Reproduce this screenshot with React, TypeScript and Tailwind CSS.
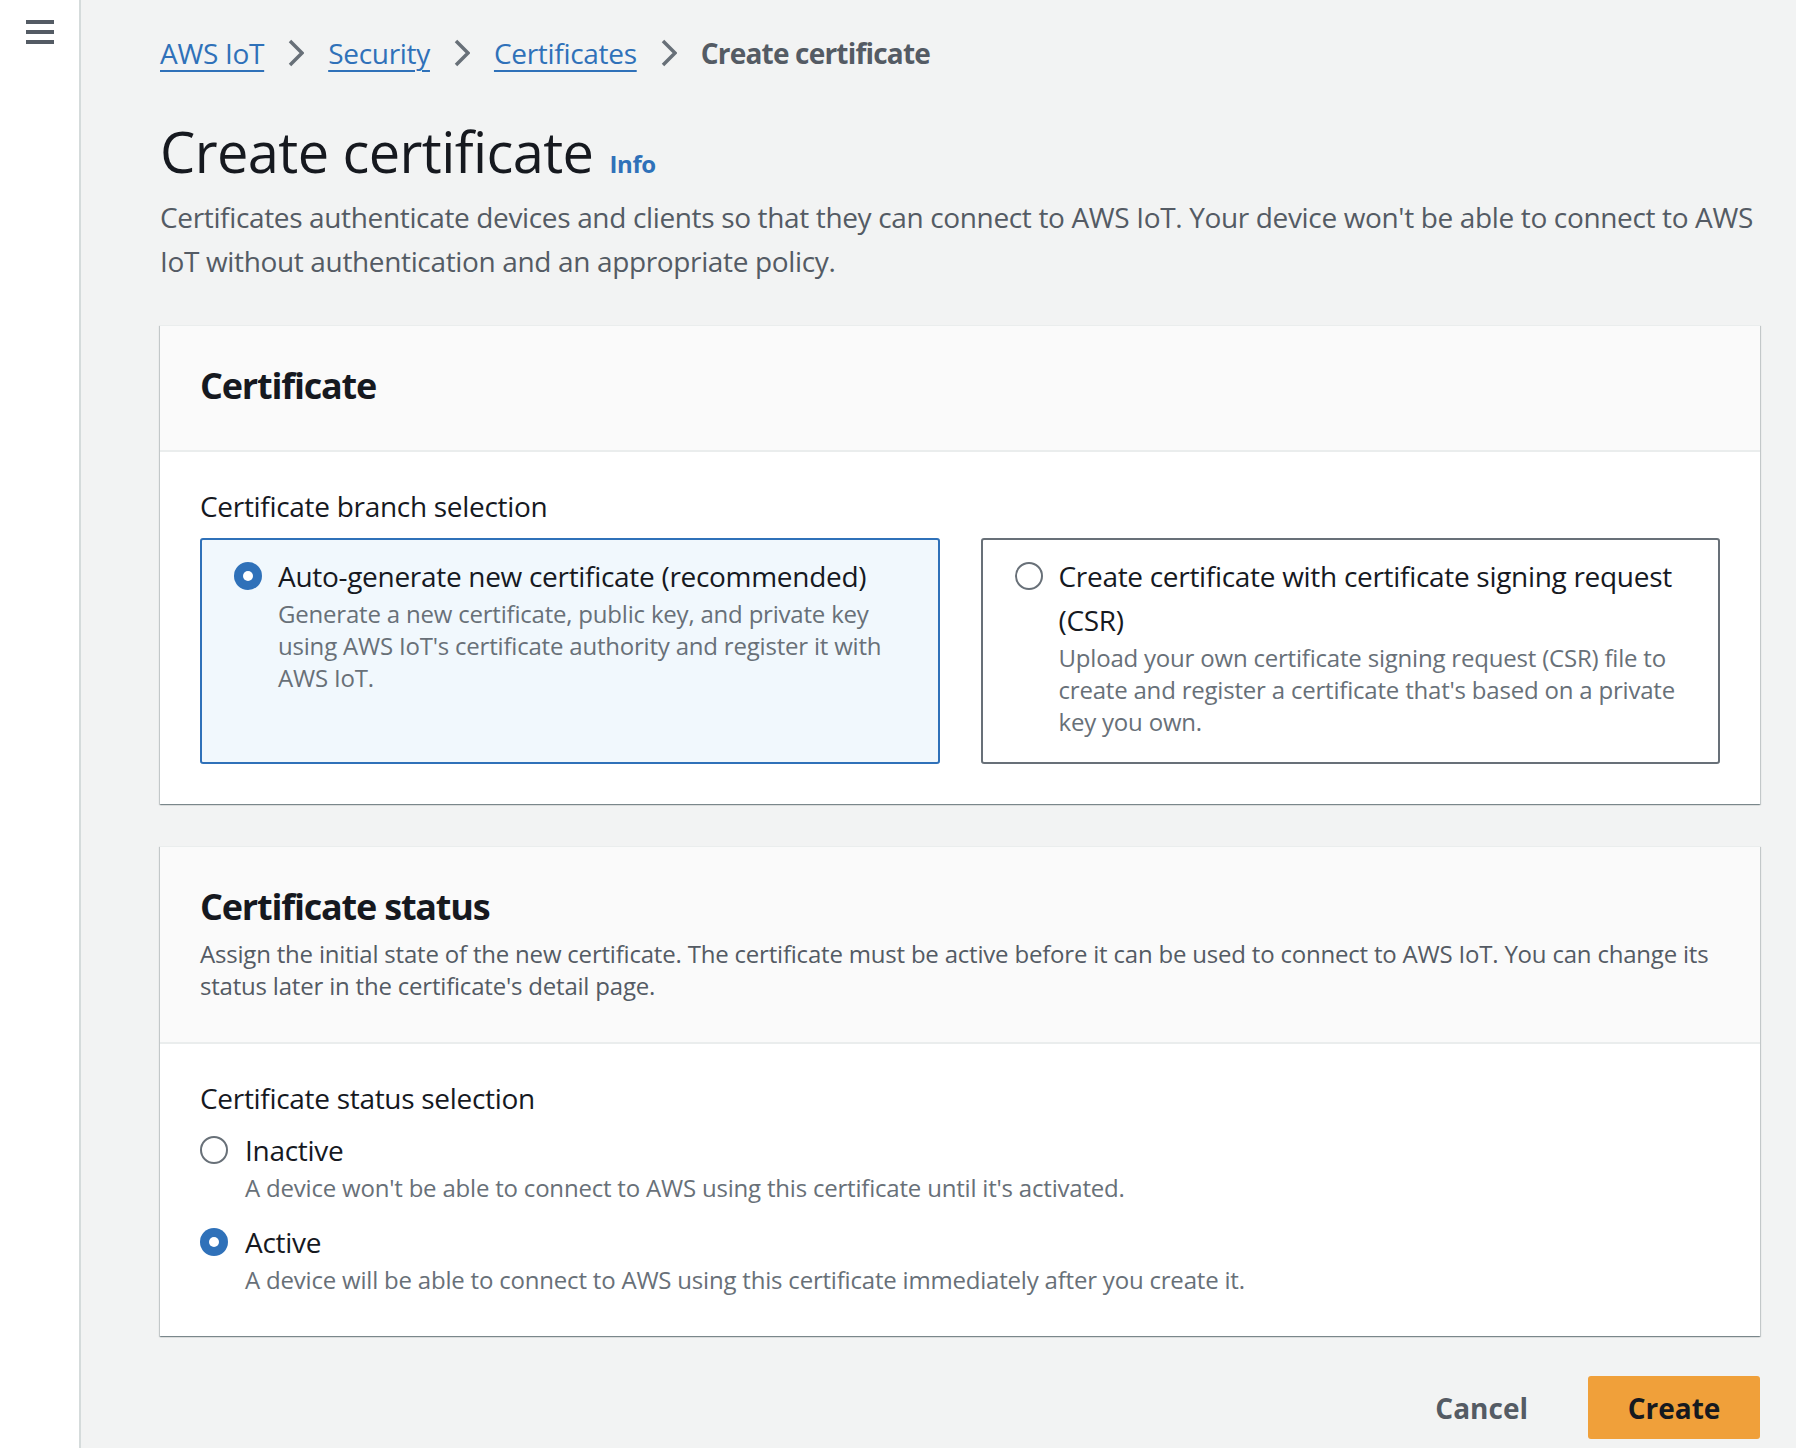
import React, { useState } from 'react';

type Choice = {
  id: string;
  label: string;
  description: string;
};

const BRANCH_OPTIONS: Choice[] = [
  {
    id: 'auto',
    label: 'Auto-generate new certificate (recommended)',
    description:
      "Generate a new certificate, public key, and private key using AWS IoT's certificate authority and register it with AWS IoT.",
  },
  {
    id: 'csr',
    label: 'Create certificate with certificate signing request (CSR)',
    description:
      "Upload your own certificate signing request (CSR) file to create and register a certificate that's based on a private key you own.",
  },
];

const STATUS_OPTIONS: Choice[] = [
  {
    id: 'inactive',
    label: 'Inactive',
    description: "A device won't be able to connect to AWS using this certificate until it's activated.",
  },
  {
    id: 'active',
    label: 'Active',
    description: 'A device will be able to connect to AWS using this certificate immediately after you create it.',
  },
];

const CRUMBS = ['AWS IoT', 'Security', 'Certificates'];

const Radio: React.FC<{ checked: boolean }> = ({ checked }) =>
  checked ? (
    <span className="mt-[8px] flex h-[28px] w-[28px] shrink-0 items-center justify-center rounded-full bg-[#2f71b9]">
      <span className="h-[10px] w-[10px] rounded-full bg-white" />
    </span>
  ) : (
    <span className="mt-[8px] h-[28px] w-[28px] shrink-0 rounded-full border-2 border-[#687078] bg-white" />
  );

const Chevron: React.FC = () => (
  <svg width="16" height="28" viewBox="0 0 16 28" className="mx-[24px] shrink-0">
    <path d="M2 2 L14 14 L2 26" fill="none" stroke="#687078" strokeWidth={3.5} strokeLinejoin="miter" />
  </svg>
);

const Card: React.FC<{ title: string; description?: string; children: React.ReactNode }> = ({
  title,
  description,
  children,
}) => (
  <div className="bg-white border-t border-[#eaeded] shadow-[0_1px_1px_0_rgba(0,28,36,0.3),1px_1px_1px_0_rgba(0,28,36,0.15),-1px_1px_1px_0_rgba(0,28,36,0.15)]">
    <div className="bg-[#fafafa] px-[40px] pt-[36px] pb-[40px] border-b-2 border-[#eaeded]">
      <h2 className="text-[36px] leading-[48px] font-bold tracking-[-1.2px] text-[#16191f]">{title}</h2>
      {description && (
        <p className="mt-[7px] text-[24px] leading-[32px] tracking-[-0.2px] text-[#545b64]">{description}</p>
      )}
    </div>
    <div className="px-[40px] pt-[32px] pb-[40px]">{children}</div>
  </div>
);

const App: React.FC = () => {
  const [branch, setBranch] = useState('auto');
  const [status, setStatus] = useState('active');

  return (
    <div className="flex min-h-[1448px] bg-[#f2f3f3] font-['Open_Sans',sans-serif] text-[#16191f]">
      {/* Side nav rail */}
      <div className="w-[81px] shrink-0 bg-white border-r-2 border-[#d5dbdb] pt-[20px] pl-[26px]">
        <div className="flex flex-col gap-[6px]">
          <span className="h-[4px] w-[28px] bg-[#545b64]" />
          <span className="h-[4px] w-[28px] bg-[#545b64]" />
          <span className="h-[4px] w-[28px] bg-[#545b64]" />
        </div>
      </div>

      <main className="flex-1 pl-[79px] pr-[36px] pt-[33px]">
        {/* Breadcrumbs */}
        <nav className="flex items-center h-[40px] text-[28px] leading-[40px] tracking-[-0.3px]">
          {CRUMBS.map((c) => (
            <React.Fragment key={c}>
              <a className="text-[#2f71b9] underline decoration-2 underline-offset-[6px] cursor-pointer">{c}</a>
              <Chevron />
            </React.Fragment>
          ))}
          <span className="font-bold tracking-[-0.8px] text-[#545b64]">Create certificate</span>
        </nav>

        {/* Page header */}
        <div className="mt-[42px] flex items-baseline">
          <h1 className="text-[56px] leading-[72px] font-normal tracking-[-0.6px] text-[#16191f]">Create certificate</h1>
          <a className="ml-[16px] text-[24px] font-bold tracking-[-0.4px] text-[#2f71b9] cursor-pointer">Info</a>
        </div>
        <p className="mt-[8px] text-[28px] leading-[44px] tracking-[-0.35px] text-[#545b64]">
          Certificates authenticate devices and clients so that they can connect to AWS IoT. Your device won't be able to
          connect to AWS IoT without authentication and an appropriate policy.
        </p>

        <div className="mt-[42px]">
          <Card title="Certificate">
            <div className="text-[28px] leading-[44px] tracking-[-0.3px]">Certificate branch selection</div>
            <div className="mt-[10px] grid grid-cols-2 gap-[41px]">
              {BRANCH_OPTIONS.map((o) => {
                const on = branch === o.id;
                return (
                  <div
                    key={o.id}
                    onClick={() => setBranch(o.id)}
                    className={`flex gap-[16px] rounded-[3px] border-2 px-[32px] pt-[14px] pb-[24px] cursor-pointer ${
                      on ? 'border-[#2f71b9] bg-[#f1f8fd]' : 'border-[#687078] bg-white'
                    }`}
                  >
                    <Radio checked={on} />
                    <div>
                      <div className="text-[28px] leading-[44px] tracking-[-0.3px] text-[#16191f]">{o.label}</div>
                      <div className="text-[24px] leading-[32px] tracking-[-0.2px] text-[#687078]">{o.description}</div>
                    </div>
                  </div>
                );
              })}
            </div>
          </Card>
        </div>

        <div className="mt-[42px]">
          <Card
            title="Certificate status"
            description="Assign the initial state of the new certificate. The certificate must be active before it can be used to connect to AWS IoT. You can change its status later in the certificate's detail page."
          >
            <div className="text-[28px] leading-[44px] tracking-[-0.3px]">Certificate status selection</div>
            <div className="mt-[8px] flex flex-col gap-[16px]">
              {STATUS_OPTIONS.map((o) => (
                <div key={o.id} onClick={() => setStatus(o.id)} className="flex gap-[17px] cursor-pointer">
                  <Radio checked={status === o.id} />
                  <div>
                    <div className="text-[28px] leading-[44px] tracking-[-0.3px] text-[#16191f]">{o.label}</div>
                    <div className="text-[24px] leading-[32px] tracking-[-0.2px] text-[#687078]">{o.description}</div>
                  </div>
                </div>
              ))}
            </div>
          </Card>
        </div>

        {/* Actions */}
        <div className="mt-[40px] flex justify-end items-center gap-[20px]">
          <button className="h-[63px] px-[40px] text-[28px] font-bold text-[#545b64]">Cancel</button>
          <button className="h-[63px] w-[172px] rounded-[3px] bg-[#f0a03a] text-[28px] font-bold text-[#16191f]">
            Create
          </button>
        </div>
      </main>
    </div>
  );
};

export default App;
